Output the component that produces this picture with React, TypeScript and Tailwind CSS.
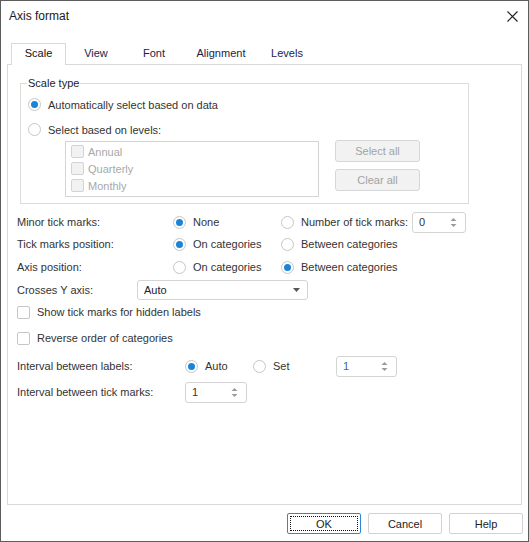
import React from "react";

function Radio({ checked }: { checked?: boolean }) {
  return (
    <span className="w-[13px] h-[13px] rounded-full border border-[#c6c6c6] bg-white flex items-center justify-center shrink-0">
      {checked && <span className="w-[7px] h-[7px] rounded-full bg-[#1b84d6]" />}
    </span>
  );
}

function RadioOpt({ checked, label, className }: { checked?: boolean; label: string; className: string }) {
  return (
    <div className={"flex items-center gap-[7px] shrink-0 " + className}>
      <Radio checked={checked} />
      <span>{label}</span>
    </div>
  );
}

function Check({ disabled }: { disabled?: boolean }) {
  return (
    <span
      className={
        "w-[13px] h-[13px] rounded-[2px] border shrink-0 " +
        (disabled ? "border-[#d3d3d3] bg-[#f2f2f2]" : "border-[#c6c6c6] bg-white")
      }
    />
  );
}

function SpinArrows() {
  return (
    <svg width="7" height="11" viewBox="0 0 7 11" className="shrink-0">
      <path d="M3.5 1 L6.5 4 L0.5 4 Z" fill="#9a9a9a" />
      <path d="M0.5 7 L6.5 7 L3.5 10 Z" fill="#9a9a9a" />
    </svg>
  );
}

function Spin({ value, className, blue }: { value: string; className: string; blue?: boolean }) {
  return (
    <div
      className={
        "h-[21px] border border-[#d4d4d4] rounded-[3px] bg-white flex items-center justify-between pl-[6px] pr-[8px] shrink-0 " +
        className
      }
    >
      <span className={blue ? "text-[#3d5fb3]" : "text-[#333]"}>{value}</span>
      <SpinArrows />
    </div>
  );
}

export default function App() {
  return (
    <div className="w-[529px] h-[542px] border border-[#5c5c5c] bg-white flex flex-col font-['Liberation_Sans',Arial,sans-serif] text-[11px] text-[#333] leading-[14px] overflow-hidden">
      {/* Title bar */}
      <div className="h-[30px] flex items-center justify-between pl-[8px] pr-[10px] shrink-0">
        <span className="text-[12px] text-[#1a1a1a]">Axis format</span>
        <svg width="11" height="11" viewBox="0 0 11 11">
          <path d="M0.5 0.5 L10.5 10.5 M10.5 0.5 L0.5 10.5" stroke="#1a1a1a" strokeWidth="1.1" />
        </svg>
      </div>

      {/* Tabs */}
      <div className="flex items-end pl-[10px] mt-[12px] h-[22px] -mb-[1px] relative z-10 shrink-0">
        <div className="w-[55px] h-[22px] border border-b-0 border-[#d9d9d9] bg-white flex justify-center pt-[2px] text-[#111]">
          Scale
        </div>
        <div className="w-[60px] h-[22px] flex justify-center pt-[3px] text-[#1c1c4a]">View</div>
        <div className="w-[56px] h-[22px] flex justify-center pt-[3px] text-[#1c1c4a]">Font</div>
        <div className="w-[78px] h-[22px] flex justify-center pt-[3px] text-[#1c1c4a]">Alignment</div>
        <div className="w-[54px] h-[22px] flex justify-center pt-[3px] text-[#1c1c4a]">Levels</div>
      </div>

      {/* Panel */}
      <div className="ml-[6px] w-[515px] h-[441px] border border-[#d9d9d9] bg-white flex flex-col shrink-0">
        <fieldset className="ml-[12px] mt-[11px] w-[449px] border border-[#dcdcdc] pb-[6px]">
          <legend className="ml-[6px] px-[1px] leading-[14px] text-[#222]">Scale type</legend>
          <div className="flex flex-col">
            <div className="ml-[7px] mt-[6px] h-[17px] flex items-center">
              <RadioOpt checked label="Automatically select based on data" className="" />
            </div>
            <div className="ml-[7px] mt-[8px] h-[17px] flex items-center">
              <RadioOpt label="Select based on levels:" className="" />
            </div>
            <div className="flex mt-[2px]">
              <div className="ml-[44px] mt-[1px] w-[254px] h-[56px] border border-[#d4d4d4] flex flex-col pl-[5px] pt-[1px] text-[#a8a8a8]">
                <div className="h-[17px] flex items-center gap-[4px]">
                  <Check disabled />
                  <span>Annual</span>
                </div>
                <div className="h-[17px] flex items-center gap-[4px]">
                  <Check disabled />
                  <span>Quarterly</span>
                </div>
                <div className="h-[17px] flex items-center gap-[4px]">
                  <Check disabled />
                  <span>Monthly</span>
                </div>
              </div>
              <div className="ml-[16px] flex flex-col gap-[7px]">
                <div className="w-[85px] h-[22px] rounded-[3px] border border-[#d6d6d6] bg-[#f2f2f2] text-[#a3a3a3] flex items-center justify-center">
                  Select all
                </div>
                <div className="w-[85px] h-[22px] rounded-[3px] border border-[#d6d6d6] bg-[#f2f2f2] text-[#a3a3a3] flex items-center justify-center">
                  Clear all
                </div>
              </div>
            </div>
          </div>
        </fieldset>

        <div className="flex flex-col pl-[9px] mt-[7px]">
          <div className="h-[22px] flex items-center">
            <span className="w-[156px] shrink-0">Minor tick marks:</span>
            <RadioOpt checked label="None" className="w-[108px]" />
            <RadioOpt label="Number of tick marks:" className="w-[131px]" />
            <Spin value="0" className="w-[54px]" />
          </div>
          <div className="h-[22px] flex items-center">
            <span className="w-[156px] shrink-0">Tick marks position:</span>
            <RadioOpt checked label="On categories" className="w-[108px]" />
            <RadioOpt label="Between categories" className="w-[131px]" />
          </div>
          <div className="h-[22px] mt-[1px] flex items-center">
            <span className="w-[156px] shrink-0">Axis position:</span>
            <RadioOpt label="On categories" className="w-[108px]" />
            <RadioOpt checked label="Between categories" className="w-[131px]" />
          </div>
          <div className="h-[22px] mt-[1px] flex items-center">
            <span className="w-[120px] shrink-0">Crosses Y axis:</span>
            <div className="w-[171px] h-[20px] border border-[#d4d4d4] rounded-[3px] bg-white flex items-center justify-between pl-[6px] pr-[7px]">
              <span className="text-[#222]">Auto</span>
              <svg width="7" height="4" viewBox="0 0 7 4">
                <path d="M0 0 L7 0 L3.5 4 Z" fill="#555" />
              </svg>
            </div>
          </div>
          <div className="h-[22px] flex items-center gap-[7px]">
            <Check />
            <span>Show tick marks for hidden labels</span>
          </div>
          <div className="h-[22px] mt-[4px] flex items-center gap-[7px]">
            <Check />
            <span>Reverse order of categories</span>
          </div>
          <div className="h-[22px] mt-[6px] flex items-center">
            <span className="w-[168px] shrink-0">Interval between labels:</span>
            <RadioOpt checked label="Auto" className="w-[68px]" />
            <RadioOpt label="Set" className="w-[83px]" />
            <Spin value="1" className="w-[61px]" blue />
          </div>
          <div className="h-[22px] mt-[4px] flex items-center">
            <span className="w-[168px] shrink-0">Interval between tick marks:</span>
            <Spin value="1" className="w-[62px]" />
          </div>
        </div>
      </div>

      {/* Footer buttons */}
      <div className="flex justify-end gap-[7px] pr-[5px] mt-[8px] shrink-0">
        <div className="w-[74px] h-[21px] border border-[#2f86d6] rounded-[2px] bg-white p-[2px] flex">
          <div className="flex-1 border border-dotted border-[#111] flex items-center justify-center text-[#222]">OK</div>
        </div>
        <div className="w-[74px] h-[21px] border border-[#d2d2d2] rounded-[2px] bg-white flex items-center justify-center text-[#222]">
          Cancel
        </div>
        <div className="w-[74px] h-[21px] border border-[#d2d2d2] rounded-[2px] bg-white flex items-center justify-center text-[#222]">
          Help
        </div>
      </div>
    </div>
  );
}
